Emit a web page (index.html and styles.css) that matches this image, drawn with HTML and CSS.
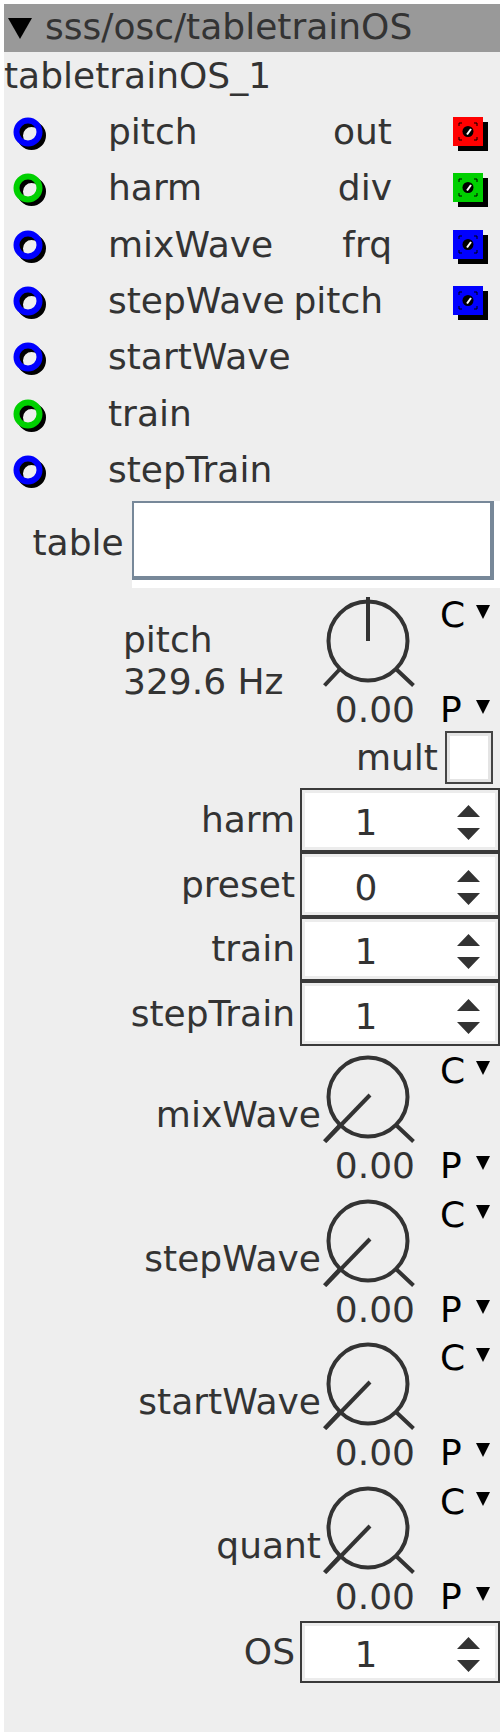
FILE: index.html
```html
<!DOCTYPE html>
<html lang="en">
<head>
<meta charset="utf-8">
<title>sss/osc/tabletrainOS</title>
<link rel="stylesheet" href="styles.css">
</head>
<body>
<svg class="defs" width="0" height="0">
<defs>
<g id="ring" fill="none" stroke-width="6">
<circle cx="18.5" cy="18.5" r="11.5" stroke="#000"/>
<circle cx="15" cy="15" r="11.5" stroke="currentColor"/>
</g>
<g id="jack">
<rect x="5" y="5" width="30" height="29" fill="#000"/>
<rect width="30" height="29" fill="currentColor"/>
<path d="M6 9V6H9M21 6H24V9M6 20V23H9M21 23H24V20" fill="none" stroke="#000" stroke-width="1"/>
<circle cx="15" cy="14.5" r="5.5" fill="#000"/>
<path d="M18 12 14 17.5" stroke="#fff" stroke-width="2"/>
</g>
<g id="dial">
<circle cx="47" cy="47" r="39.5"/>
<path d="M19 75 3.5 91.5M75 75 92.5 91.5"/>
</g>
</defs>
</svg>

<div class="panel">
  <div class="head"><span class="fold"></span>sss/osc/tabletrainOS</div>
  <div class="name">tabletrainOS_1</div>

  <div class="ports">
    <div class="port">
      <svg class="pin blue"><use href="#ring"/></svg>
      <span class="in">pitch</span>
      <span class="out">out</span>
      <svg class="jack red"><use href="#jack"/></svg>
    </div>
    <div class="port">
      <svg class="pin green"><use href="#ring"/></svg>
      <span class="in">harm</span>
      <span class="out">div</span>
      <svg class="jack green"><use href="#jack"/></svg>
    </div>
    <div class="port">
      <svg class="pin blue"><use href="#ring"/></svg>
      <span class="in">mixWave</span>
      <span class="out">frq</span>
      <svg class="jack blue"><use href="#jack"/></svg>
    </div>
    <div class="port">
      <svg class="pin blue"><use href="#ring"/></svg>
      <span class="in">stepWave</span>
      <span class="out nudge">pitch</span>
      <svg class="jack blue"><use href="#jack"/></svg>
    </div>
    <div class="port">
      <svg class="pin blue"><use href="#ring"/></svg>
      <span class="in">startWave</span>
    </div>
    <div class="port">
      <svg class="pin green"><use href="#ring"/></svg>
      <span class="in">train</span>
    </div>
    <div class="port">
      <svg class="pin blue"><use href="#ring"/></svg>
      <span class="in">stepTrain</span>
    </div>
  </div>

  <div class="tbl">
    <label for="table">table</label>
    <div class="field"><input id="table" type="text"></div>
  </div>

  <div class="knob pitch">
    <div class="klabel">pitch<br>329.6 Hz</div>
    <svg class="dial" viewBox="0 0 96 95"><use href="#dial"/><path d="M47 47V3"/></svg>
    <div class="mode"><span class="key">C</span><span class="caret"></span></div>
    <div class="value">0.00</div>
    <div class="mode"><span class="key">P</span><span class="caret"></span></div>
  </div>
  <div class="mult">mult<span class="check"></span></div>

  <div class="nums">
    <div class="num">
      <span class="nlabel">harm</span>
      <div class="box"><span class="val">1</span><svg class="spin" viewBox="0 0 23 35"><path d="M11.5 0 23 12H0ZM0 23H23L11.5 35Z"/></svg></div>
    </div>
    <div class="num">
      <span class="nlabel">preset</span>
      <div class="box"><span class="val">0</span><svg class="spin" viewBox="0 0 23 35"><path d="M11.5 0 23 12H0ZM0 23H23L11.5 35Z"/></svg></div>
    </div>
    <div class="num">
      <span class="nlabel">train</span>
      <div class="box"><span class="val">1</span><svg class="spin" viewBox="0 0 23 35"><path d="M11.5 0 23 12H0ZM0 23H23L11.5 35Z"/></svg></div>
    </div>
    <div class="num">
      <span class="nlabel">stepTrain</span>
      <div class="box"><span class="val">1</span><svg class="spin" viewBox="0 0 23 35"><path d="M11.5 0 23 12H0ZM0 23H23L11.5 35Z"/></svg></div>
    </div>
  </div>

  <div class="dials">
    <div class="knob">
      <div class="klabel">mixWave</div>
      <svg class="dial" viewBox="0 0 96 95"><use href="#dial"/><path d="M49 45 4 91.5"/></svg>
      <div class="mode"><span class="key">C</span><span class="caret"></span></div>
      <div class="value">0.00</div>
      <div class="mode"><span class="key">P</span><span class="caret"></span></div>
    </div>
    <div class="knob">
      <div class="klabel">stepWave</div>
      <svg class="dial" viewBox="0 0 96 95"><use href="#dial"/><path d="M49 45 4 91.5"/></svg>
      <div class="mode"><span class="key">C</span><span class="caret"></span></div>
      <div class="value">0.00</div>
      <div class="mode"><span class="key">P</span><span class="caret"></span></div>
    </div>
    <div class="knob">
      <div class="klabel">startWave</div>
      <svg class="dial" viewBox="0 0 96 95"><use href="#dial"/><path d="M49 45 4 91.5"/></svg>
      <div class="mode"><span class="key">C</span><span class="caret"></span></div>
      <div class="value">0.00</div>
      <div class="mode"><span class="key">P</span><span class="caret"></span></div>
    </div>
    <div class="knob">
      <div class="klabel">quant</div>
      <svg class="dial" viewBox="0 0 96 95"><use href="#dial"/><path d="M49 45 4 91.5"/></svg>
      <div class="mode"><span class="key">C</span><span class="caret"></span></div>
      <div class="value">0.00</div>
      <div class="mode"><span class="key">P</span><span class="caret"></span></div>
    </div>
  </div>

  <div class="num os">
    <span class="nlabel">OS</span>
    <div class="box"><span class="val">1</span><svg class="spin" viewBox="0 0 23 35"><path d="M11.5 0 23 12H0ZM0 23H23L11.5 35Z"/></svg></div>
  </div>
</div>
</body>
</html>
```

FILE: styles.css
```css
body {
  margin: 0;
  background: #fff;
  font-family: "DejaVu Sans", Verdana, sans-serif;
  font-size: 36px;
  line-height: 42px;
  color: #333;
}
.defs {
  position: absolute;
  width: 0;
  height: 0;
}
.panel {
  margin: 4px;
  background: #eee;
  padding-bottom: 48.7px;
}
.head {
  height: 48px;
  line-height: 45px;
  background: #999;
  white-space: nowrap;
}
.fold {
  display: inline-block;
  margin: 0 13px 0 4px;
  border-left: 12px solid transparent;
  border-right: 12px solid transparent;
  border-top: 21px solid #000;
}
.name {
  height: 42px;
  padding: 2.6px 0 7.2px;
}

/* ports */
.port {
  display: flex;
  align-items: center;
  height: 56.33px;
}
.pin {
  flex: none;
  width: 30px;
  height: 30px;
  margin: 0 65.5px 0 8.5px;
  overflow: visible;
}
.port .in {
  flex: 1;
}
.port .out {
  padding-right: 3px;
}
.port .nudge {
  margin-right: 9px;
}
.jack {
  flex: none;
  width: 30px;
  height: 30px;
  margin: 0 17px 0 58px;
  overflow: visible;
}
.blue { color: #0000ff; }
.green { color: #00d000; }
.red { color: #ff0000; }

/* table field */
.tbl {
  display: flex;
  align-items: flex-start;
  padding-top: 2.6px;
}
.tbl label {
  margin: 20.9px 8.3px 0 28.5px;
}
.field {
  flex: 1;
  background: #fff;
  padding: 0 6px 8px 0;
}
.field input {
  display: block;
  width: 100%;
  height: 79.3px;
  box-sizing: border-box;
  margin: 0;
  padding: 0;
  border: solid #778899;
  border-width: 2px 4px 4px 2px;
  background: #fff;
  font: inherit;
  outline: none;
}

/* knobs */
.knob {
  display: grid;
  grid-template-columns: auto 96px 75px;
  grid-template-rows: 95px 42px;
  justify-content: end;
  padding-right: 8px;
}
.knob.pitch {
  margin-top: 6px;
}
.dials {
  margin-top: 4px;
}
.knob + .knob {
  margin-top: 6.67px;
}
.klabel {
  align-self: end;
  text-align: right;
  margin-bottom: 9px;
  white-space: nowrap;
}
.pitch .klabel {
  grid-row: 1 / 3;
  align-self: start;
  text-align: left;
  margin: 25px 37.5px 0 0;
}
.dial {
  width: 96px;
  height: 95px;
  fill: none;
  stroke: #333;
  stroke-width: 4;
}
.dial circle {
  fill: #fff;
}
.value {
  grid-column: 2;
  text-align: right;
  padding-right: 2px;
}
.mode {
  padding-left: 23px;
  color: #000;
  white-space: nowrap;
}
.key {
  display: inline-block;
  width: 36px;
}
.caret {
  display: inline-block;
  vertical-align: 8px;
  border-left: 7.5px solid transparent;
  border-right: 7.5px solid transparent;
  border-top: 14px solid #000;
}
.mult {
  display: flex;
  justify-content: flex-end;
  align-items: center;
  height: 54px;
  padding-right: 7px;
}
.check {
  width: 48px;
  height: 53px;
  box-sizing: border-box;
  margin-left: 7px;
  border: 2px solid #444;
  box-shadow: inset 0 0 0 3px #e4e4e4;
  background: #fff;
}

/* number boxes */
.nums {
  margin-top: 3px;
}
.num {
  display: flex;
  justify-content: flex-end;
  align-items: center;
  height: 64.5px;
}
.num.os {
  height: 62.6px;
  margin-top: 2.7px;
}
.nlabel {
  margin-right: 5px;
}
.box {
  display: flex;
  align-items: center;
  width: 200px;
  height: 100%;
  box-sizing: border-box;
  border: 2px solid #3a3a3a;
  box-shadow: inset 0 0 0 3px #ececec;
  background: #fff;
}
.val {
  flex: 1;
  text-align: center;
  padding: 6px 0 0 2px;
}
.spin {
  flex: none;
  width: 23px;
  height: 35px;
  margin: 5px 18px 0 29px;
  fill: #333;
}
```
